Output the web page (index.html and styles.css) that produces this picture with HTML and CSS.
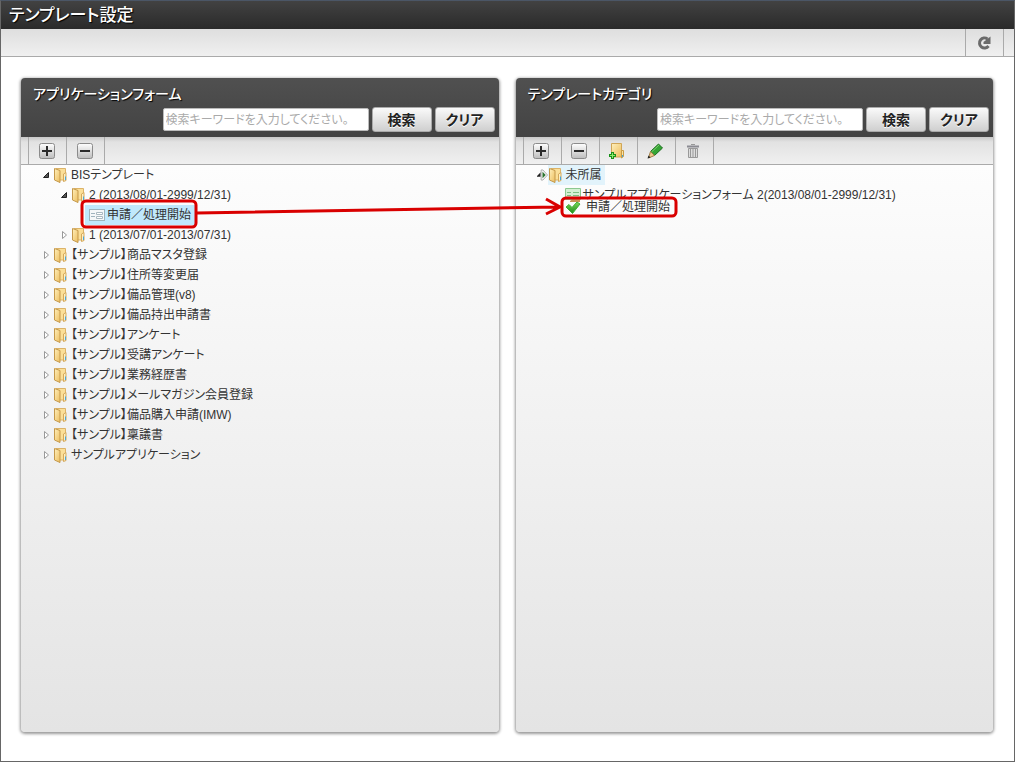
FILE: index.html
```html
<!DOCTYPE html>
<html lang="ja">
<head>
    <meta charset="UTF-8">
    <meta name="viewport" content="width=device-width, initial-scale=1.0">
    <title>テンプレート設定</title>
    <link rel="stylesheet" href="styles.css">
</head>
<body>
    <!-- Shared icons -->
    <svg class="sprite" aria-hidden="true">
        <defs>
            <linearGradient id="gold" x1="0" y1="0" x2="1" y2="1">
                <stop offset="0" stop-color="#fff0bd"/>
                <stop offset="1" stop-color="#edbd5c"/>
            </linearGradient>
            <linearGradient id="silver" x1="0" y1="0" x2="0" y2="1">
                <stop offset="0" stop-color="#ffffff"/>
                <stop offset="1" stop-color="#bdbdbd"/>
            </linearGradient>
            <linearGradient id="leaf" x1="0" y1="0" x2="0" y2="1">
                <stop offset="0" stop-color="#7ed957"/>
                <stop offset="1" stop-color="#1d8a1b"/>
            </linearGradient>
        </defs>
        <symbol id="folder" viewBox="0 0 16 16">
            <path d="M3 1.500h9.500v11.500H5z" fill="#fbdf98" stroke="#dcb368"/>
            <path d="M10.500 7l2.500-1.500v8l-2.500 1z" fill="#fff0c4" stroke="#d5a95a"/>
            <path d="M1.500 1.500l5.500 2v12l-5.500-2.500z" fill="url(#gold)" stroke="#c4984a"/>
            <path d="M12.500 9.500v3.500" stroke="#4aa6d8"/>
        </symbol>
        <symbol id="plus" viewBox="0 0 16 16">
            <rect x=".5" y=".5" width="15" height="15" rx="2" fill="url(#silver)" stroke="#8b8b8b"/>
            <path d="M3 8h10M8 3v10" stroke="#2b2b2b" stroke-width="2"/>
        </symbol>
        <symbol id="minus" viewBox="0 0 16 16">
            <rect x=".5" y=".5" width="15" height="15" rx="2" fill="url(#silver)" stroke="#8b8b8b"/>
            <path d="M3 8h10" stroke="#2b2b2b" stroke-width="2"/>
        </symbol>
        <symbol id="open" viewBox="0 0 8 8">
            <path d="M6.500 1.500v5h-5z" fill="#555" stroke="#222"/>
        </symbol>
        <symbol id="closed" viewBox="0 0 8 8">
            <path d="M2.500 0.500v7l4-3.500z" fill="#fff" stroke="#999"/>
        </symbol>
        <symbol id="form" viewBox="0 0 16 16">
            <rect x=".5" y="2.500" width="15" height="11" fill="#f4f7f8" stroke="#9eb4bd"/>
            <path d="M2 6.500h4M2 9.500h4" stroke="#9fb3bd"/>
            <path d="M7.500 5.500h6v2h-6zM7.500 9.500h6v2h-6z" fill="#fff" stroke="#a9b9c0"/>
        </symbol>
    </svg>

    <div class="page">
        <header class="title-bar">
            <h1>テンプレート設定</h1>
        </header>
        <div class="page-tools">
            <button class="tool" type="button" aria-label="更新">
                <svg class="icon" viewBox="0 0 16 16"><path d="M11.500 4A5 5 0 1 0 12.500 11" fill="none" stroke="#6a6a6a" stroke-width="3"/><path d="M14.500 1.500V9H7.500V7z" fill="#6a6a6a"/></svg>
            </button>
        </div>

        <main class="panels">
            <section class="panel">
                <div class="panel-head">
                    <h2>アプリケーションフォーム</h2>
                    <form class="search">
                        <input type="text" aria-label="検索キーワード" placeholder="検索キーワードを入力してください。">
                        <button type="button">検索</button>
                        <button type="button">クリア</button>
                    </form>
                </div>
                <div class="toolbar">
                    <button class="tool" type="button" aria-label="すべて開く"><svg class="icon"><use href="#plus"/></svg></button>
                    <button class="tool" type="button" aria-label="すべて閉じる"><svg class="icon"><use href="#minus"/></svg></button>
                </div>
                <ul class="tree">
                    <li>
                        <div class="row"><svg class="arrow"><use href="#open"/></svg><svg class="icon"><use href="#folder"/></svg><span>BISテンプレート</span></div>
                        <ul>
                            <li>
                                <div class="row"><svg class="arrow"><use href="#open"/></svg><svg class="icon"><use href="#folder"/></svg><span>2 (2013/08/01-2999/12/31)</span></div>
                                <ul>
                                    <li><div class="row leaf selected"><svg class="icon"><use href="#form"/></svg><span>申請／処理開始</span></div></li>
                                </ul>
                            </li>
                            <li><div class="row"><svg class="arrow"><use href="#closed"/></svg><svg class="icon"><use href="#folder"/></svg><span>1 (2013/07/01-2013/07/31)</span></div></li>
                        </ul>
                    </li>
                    <li><div class="row"><svg class="arrow"><use href="#closed"/></svg><svg class="icon"><use href="#folder"/></svg><span>【サンプル】商品マスタ登録</span></div></li>
                    <li><div class="row"><svg class="arrow"><use href="#closed"/></svg><svg class="icon"><use href="#folder"/></svg><span>【サンプル】住所等変更届</span></div></li>
                    <li><div class="row"><svg class="arrow"><use href="#closed"/></svg><svg class="icon"><use href="#folder"/></svg><span>【サンプル】備品管理(v8)</span></div></li>
                    <li><div class="row"><svg class="arrow"><use href="#closed"/></svg><svg class="icon"><use href="#folder"/></svg><span>【サンプル】備品持出申請書</span></div></li>
                    <li><div class="row"><svg class="arrow"><use href="#closed"/></svg><svg class="icon"><use href="#folder"/></svg><span>【サンプル】アンケート</span></div></li>
                    <li><div class="row"><svg class="arrow"><use href="#closed"/></svg><svg class="icon"><use href="#folder"/></svg><span>【サンプル】受講アンケート</span></div></li>
                    <li><div class="row"><svg class="arrow"><use href="#closed"/></svg><svg class="icon"><use href="#folder"/></svg><span>【サンプル】業務経歴書</span></div></li>
                    <li><div class="row"><svg class="arrow"><use href="#closed"/></svg><svg class="icon"><use href="#folder"/></svg><span>【サンプル】メールマガジン会員登録</span></div></li>
                    <li><div class="row"><svg class="arrow"><use href="#closed"/></svg><svg class="icon"><use href="#folder"/></svg><span>【サンプル】備品購入申請(IMW)</span></div></li>
                    <li><div class="row"><svg class="arrow"><use href="#closed"/></svg><svg class="icon"><use href="#folder"/></svg><span>【サンプル】稟議書</span></div></li>
                    <li><div class="row"><svg class="arrow"><use href="#closed"/></svg><svg class="icon"><use href="#folder"/></svg><span>サンプルアプリケーション</span></div></li>
                </ul>
            </section>

            <section class="panel">
                <div class="panel-head">
                    <h2>テンプレートカテゴリ</h2>
                    <form class="search">
                        <input type="text" aria-label="検索キーワード" placeholder="検索キーワードを入力してください。">
                        <button type="button">検索</button>
                        <button type="button">クリア</button>
                    </form>
                </div>
                <div class="toolbar">
                    <button class="tool" type="button" aria-label="すべて開く"><svg class="icon"><use href="#plus"/></svg></button>
                    <button class="tool" type="button" aria-label="すべて閉じる"><svg class="icon"><use href="#minus"/></svg></button>
                    <button class="tool" type="button" aria-label="カテゴリ追加">
                        <svg class="icon" viewBox="0 0 16 16"><path d="M2.500.5h10v13.500h-10z" fill="url(#gold)" stroke="#d0a657"/><path d="M12.500 7.500h2v6l-2 1.500z" fill="#fbe3a2" stroke="#c99b45"/><path d="M13.500 12v2" stroke="#4aa6d8"/><path d="M0 12.500h7M3.500 9v7" stroke="#19911a" stroke-width="3"/><path d="M1 12.500h5M3.500 10v5" stroke="#8fe86c"/></svg>
                    </button>
                    <button class="tool" type="button" aria-label="編集">
                        <svg class="icon" viewBox="0 0 16 16"><path d="M3.500 8.500L11.500 1l4 4L7.500 12.500z" fill="#35a535" stroke="#1c6e1f"/><path d="M4.500 9L12 2" stroke="#7fd06f"/><path d="M3.500 8.500l4 4-6 2.500z" fill="#ecc98b" stroke="#a07c44"/><path d="M.5 15.500l1-3 2 2z" fill="#222"/></svg>
                    </button>
                    <button class="tool" type="button" aria-label="削除">
                        <svg class="icon" viewBox="0 0 16 16"><path d="M3.500 5.500h9v9h-9z" fill="#ddd" stroke="#999"/><path d="M5.500 6v8M8 6v8M10.500 6v8" stroke="#999"/><path d="M2 3.500h12" stroke="#8b8b92" stroke-width="2"/><path d="M6 1.500h4" stroke="#999"/></svg>
                    </button>
                </div>
                <ul class="tree">
                    <li>
                        <div class="row"><svg class="arrow drop" viewBox="0 0 12 12"><path d="M0 7l4-4v5H0z" fill="#222"/><path d="M4.500.500h2l5 5.500-5 5.500h-2z" fill="#f4f4f4" stroke="#aaa"/><path d="M6 2.500L9.500 6 6 9.500z" fill="#2d7430"/></svg><div class="target"><svg class="icon"><use href="#folder"/></svg><span>未所属</span></div></div>
                        <ul>
                            <li><div class="row leaf"><svg class="icon" viewBox="0 0 16 16"><path d="M.5 1.500h15v11H.5z" fill="#d5f0d2" stroke="#8cc890"/><path d="M2 5.500h4M2 8.500h4M8 5.500h6M8 8.500h6" stroke="#7dbf82"/><path d="M5 14l5-4 5 2v3H5z" fill="#cc9256"/></svg><span>サンプルアプリケーションフォーム 2(2013/08/01-2999/12/31)</span></div></li>
                        </ul>
                    </li>
                </ul>
            </section>
        </main>

        <!-- Item being dragged, with its route -->
        <div class="dragged">
            <svg class="icon" viewBox="0 0 16 16"><path d="M1 8l3-2.500 3 3 5-5.500 3 2-7.500 9.500z" fill="url(#leaf)" stroke="#3fae35"/></svg>
            <span>申請／処理開始</span>
        </div>
        <svg class="route" width="700" height="240" fill="none" stroke="#d90000" stroke-width="3" aria-hidden="true">
            <rect x="81" y="200" width="114" height="26" rx="4"/>
            <rect x="561" y="197" width="114" height="18" rx="4"/>
            <path d="M196 212L558 206M545 198l14 8-14 7"/>
        </svg>
    </div>
</body>
</html>
```

FILE: styles.css
```css
* {
    box-sizing: border-box;
}

body {
    margin: 0;
    color: #333;
    font: 12px/20px "Liberation Sans", "Noto Sans CJK JP", sans-serif;
    font-feature-settings: "palt";
}

button, input {
    font: inherit;
    font-feature-settings: inherit;
}

h1, h2, ul {
    margin: 0;
    padding: 0;
}

ul {
    list-style: none;
}

svg {
    display: block;
    flex: none;
}

.sprite {
    position: absolute;
    width: 0;
    height: 0;
}

.page {
    position: relative;
    display: flex;
    flex-direction: column;
    min-height: 100vh;
    border: 1px solid #666;
    border-top-color: #4b5666;
    background: #fff;
}

.title-bar {
    height: 28px;
    padding: 0 8px;
    background: linear-gradient(#424242, #2a2a2a);
    color: #fff;
}

.title-bar h1 {
    font-size: 17px;
    font-weight: 500;
    line-height: 30px;
    text-shadow: 1px 1px 1px #000;
}

.page-tools {
    display: flex;
    justify-content: flex-end;
    height: 28px;
    padding-right: 10px;
    border-bottom: 1px solid #aaa;
    background: linear-gradient(#dedede, #f0f0f0);
}

.page-tools .tool {
    border-left: 1px solid #aaa;
    width: 39px;
}

.tool {
    display: flex;
    align-items: center;
    justify-content: center;
    width: 38px;
    padding: 0 2px 0 0;
    border: 0;
    border-right: 1px solid #aaa;
    background: none;
    cursor: pointer;
}

.icon {
    width: 16px;
    height: 16px;
}

.panels {
    display: flex;
    flex: 1;
    gap: 17px;
    padding: 21px 21px 29px 20px;
}

.panel {
    display: flex;
    flex: 1;
    flex-direction: column;
    min-width: 0;
    border-radius: 4px;
    background: #e4e4e4;
    box-shadow: 0 1px 3px 1px rgba(0, 0, 0, 0.4);
}

.panel-head {
    height: 59px;
    padding: 6px 4px 0 12px;
    border-radius: 4px 4px 0 0;
    background: linear-gradient(#505050, #434343);
    color: #fff;
}

.panel-head h2 {
    font-size: 14px;
    font-weight: 500;
    line-height: 20px;
    text-shadow: 1px 1px 1px #000;
}

.search {
    display: flex;
    gap: 3px;
    justify-content: flex-end;
    align-items: center;
    padding-top: 3px;
}

.search input {
    width: 206px;
    height: 23px;
    padding: 0 2px;
    border: 1px solid #bbb;
    border-radius: 2px;
    background: #fff;
}

.search input::placeholder {
    color: #aaa;
}

.search button {
    width: 60px;
    height: 25px;
    padding: 0;
    border: 1px solid #aaa;
    border-radius: 3px;
    background: linear-gradient(#fafafa, #cfcfcf);
    color: #222;
    font-size: 14px;
    font-weight: bold;
    text-shadow: 0 1px 0 #fff;
    cursor: pointer;
}

.toolbar {
    display: flex;
    height: 28px;
    padding-left: 7px;
    border-bottom: 1px solid #aaa;
    background: linear-gradient(#c9c9c9, #e2e2e2 5px, #f0f0f0);
}

.toolbar .tool:first-child {
    width: 39px;
    border-left: 1px solid #aaa;
}

.tree {
    flex: 1;
    padding-left: 21px;
    border-radius: 0 0 4px 4px;
    background: linear-gradient(#fdfdfd, #e4e4e4);
}

.tree ul {
    padding-left: 18px;
}

.row {
    display: flex;
    align-items: center;
    width: max-content;
    height: 20px;
}

.arrow {
    width: 8px;
    height: 8px;
    margin-right: 3px;
}

.drop {
    width: 11px;
    height: 12px;
    margin-right: 0;
}

.row span {
    padding-left: 2px;
}

.leaf {
    margin-left: 10px;
}

.selected {
    margin-left: 7px;
    padding: 0 4px;
    background: #c0e8fc;
}

.target {
    display: flex;
    align-items: center;
    height: 20px;
    padding-right: 3px;
    background: #e2f3fb;
}

.dragged {
    position: absolute;
    top: 196px;
    left: 564px;
    display: flex;
    align-items: center;
    gap: 5px;
}

.route {
    position: absolute;
    top: 0;
    left: 0;
    pointer-events: none;
}
```
